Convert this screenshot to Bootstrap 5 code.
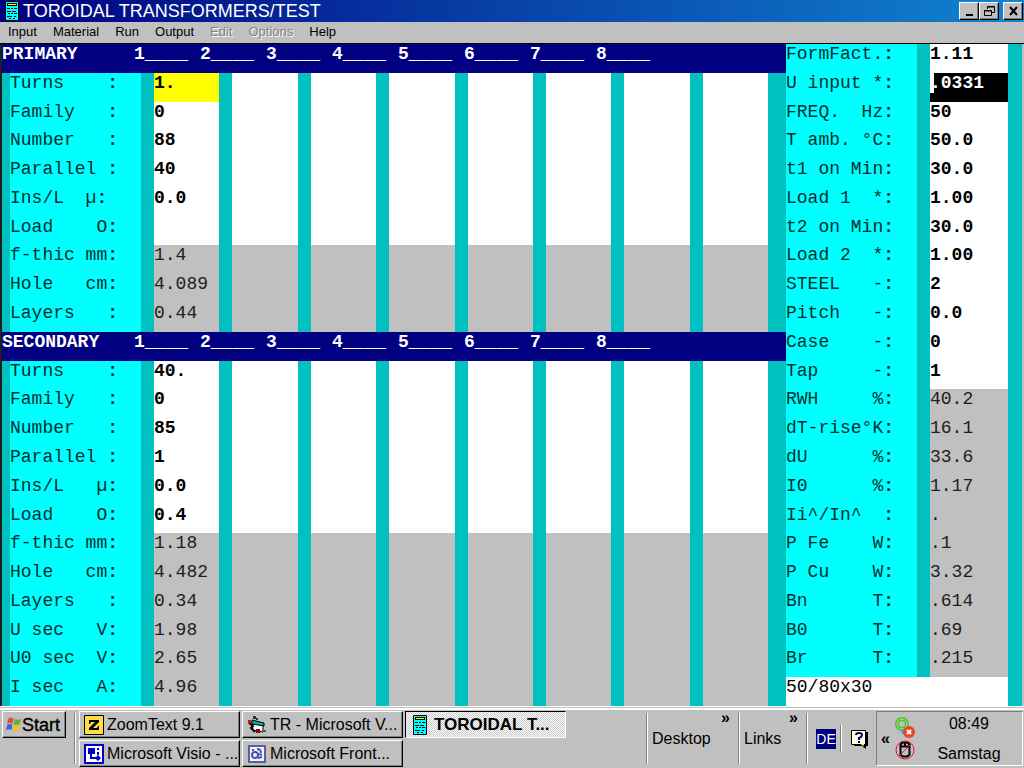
<!DOCTYPE html>
<html lang="en">
<head>
<meta charset="utf-8">
<meta name="viewport" content="width=device-width, initial-scale=1">
<title>TOROIDAL TRANSFORMERS/TEST</title>
<link href="https://cdn.jsdelivr.net/npm/bootstrap@5.3.0/dist/css/bootstrap.min.css" rel="stylesheet">
<style>
:root{--face:#c0c0c0;--teal:#00c0c0;--aqua:#00ffff;--navy:#000080}
body{font-family:"Liberation Sans",Arial,sans-serif;background:var(--face);color:#000;line-height:20px;min-height:100vh}
.titlebar{height:22px;background:linear-gradient(90deg,#000080,#1084d0);color:#fff;padding:0 1px 0 5px}
.titlebar h1{font-size:18px;line-height:22px;font-weight:400}
button{border-radius:0;font-family:inherit;color:#000}
.raised{background:var(--face);border:1px solid;border-color:#fff #000 #000 #fff;box-shadow:inset -1px -1px #808080}
.winbtn{width:20px;height:18px;padding:0}
.winbtn svg{display:block;margin:auto}
.menubar{height:22px;border-bottom:1px solid #000;font-size:13px;line-height:18px}
.menubar button{background:none;border:0;padding:0 8px 2px}
.menubar button:disabled{color:#808080;text-shadow:1px 1px #fff;opacity:1}
.work{border-left:2px solid #202020;border-right:2px solid var(--face);background:var(--teal);font-family:"Liberation Mono","Courier New",monospace;font-size:18px;line-height:20px}
.sheet{table-layout:fixed;border-collapse:separate;border-spacing:0;height:calc(100vh - 106px)}
.sheet td,.sheet th{padding:0;vertical-align:top;white-space:pre;font-weight:400;text-align:left;overflow:hidden}
.sheet tbody th{background:var(--aqua);color:#003030;border-right:13px solid var(--teal)}
.sheet .lead-in{border-left:8px solid var(--teal)}
.sheet td{background:var(--face);border-right:13px solid var(--teal);color:#202020}
.sheet td.entry{background:#fff;font-weight:700;color:#000}
.sheet td.picked{background:#ff0}
.sheet td.editing{background:#000;color:#fff;position:relative}
.caret{position:absolute;left:0;top:0;width:4px;height:20px;background:#fff}
.sheet .edge{border:0;background:var(--teal)}
.sheet tbody th.band{background:var(--navy);color:#fff;font-weight:700;border:0}
.band-name{width:132px}
.band-col{width:66px}
.results{width:236px;flex:none}
.results td{border-right-width:14px!important}
.sheet td.core{background:#fff;color:#000}
.taskbar{height:62px;border-top:1px solid #fff;background:var(--face)}
.taskbar-in{border-top:2px solid #fff;margin-top:1px;height:60px;padding:1px 0 2px 2px}
.task{height:27px;padding:0 4px;font-size:16px;line-height:24px;white-space:nowrap;overflow:hidden;text-align:left;gap:3px}
.task svg{flex:none}
.task.active{border:1px solid;border-color:#000 #fff #fff #000;background:repeating-conic-gradient(#fff 0 25%,#c8c8c8 0 50%) 0 0/2px 2px;font-size:17px;font-weight:700;padding-left:7px;gap:7px}
.start{height:27px;width:64px;padding:0 2px;font-size:18px;-webkit-text-stroke:.4px #000}
.tasks{display:grid;grid-template-columns:repeat(3,161px);gap:2px;align-content:start;padding-left:3px}
.grip{width:2px;border-left:1px solid #808080;border-right:1px solid #fff;margin:2px 0}
.quick{padding-left:4px}
.band-link{font-size:16px;color:#000;text-decoration:none}
.more{font-size:16px;line-height:14px;font-weight:700;background:none;border:0;padding:0 8px 0 0}
.lang{background:var(--navy);color:#fff;width:20px;height:20px;border:0;padding:0;font-size:14px;line-height:20px}
.tray{border:1px solid;border-color:#808080 #fff #fff #808080;width:147px;margin-right:1px}
.clock{font-size:16px;line-height:30px;width:90px;margin-right:8px}
</style>
</head>
<body class="d-flex flex-column">
<header class="titlebar d-flex align-items-center">
  <svg width="14" height="20" viewBox="0 0 14 20" aria-hidden="true"><use href="#calc"/></svg>
  <h1 class="m-0 ms-1 flex-grow-1">TOROIDAL TRANSFORMERS/TEST</h1>
  <button class="winbtn raised" aria-label="Minimize"><svg width="15" height="14"><path d="M4 11h7" stroke="#000" stroke-width="2"/></svg></button>
  <button class="winbtn raised" aria-label="Restore"><svg width="15" height="14" fill="none" stroke="#000"><path d="M5.500 5V2.500h7v6H10M5 3h8M2.500 6.500h7v5h-7zM2 7h8"/></svg></button>
  <button class="winbtn raised ms-1" aria-label="Close"><svg width="15" height="14"><path d="M4 3l7 8M11 3l-7 8" stroke="#000" stroke-width="2"/></svg></button>
</header>
<nav class="menubar d-flex" aria-label="Main menu">
  <button>Input</button><button>Material</button><button>Run</button><button>Output</button><button disabled>Edit</button><button disabled>Options</button><button>Help</button>
</nav>
<main class="work d-flex flex-grow-1">
  <table class="sheet w-100" id="windings">
    <colgroup><col style="width:152px"><col span="8"><col style="width:5px"></colgroup>
    <tbody></tbody>
  </table>
  <table class="sheet results" id="results">
    <colgroup><col style="width:144px"><col></colgroup>
    <tbody></tbody>
  </table>
</main>
<footer class="taskbar">
  <div class="taskbar-in d-flex">
    <button class="start raised d-flex align-items-center"><svg width="17" height="18" viewBox="0 0 16 16" aria-hidden="true"><path d="M3 2q3-2 5 0L7 7Q5 5 2 7z" fill="#e8502a"/><path d="M9 2q3 2 6 0l-1 5q-3 2-6 0z" fill="#62b03a"/><path d="M2 8q3-2 5 0l-1 5q-2-2-5 0z" fill="#3a68d8"/><path d="M8 8q3 2 6 0l-1 5q-3 2-6 0z" fill="#f4c020"/></svg><span>Start</span></button>
    <div class="grip ms-2"></div>
    <div class="tasks flex-grow-1">
      <button class="task raised d-flex align-items-center"><svg width="20" height="20" aria-hidden="true"><path d="M.5.5h19v19H.5z" fill="#fd4" stroke="#000"/><path d="M5 5h10v2l-6 6h4l1-2h1v4H5v-2l6-6H7L6 9H5z"/></svg>ZoomText 9.1</button>
      <button class="task raised d-flex align-items-center"><svg width="20" height="20" aria-hidden="true"><path d="M5 7l11 2v8L6 15z" fill="#fff" stroke="#000"/><path d="M5 5l12 3v3L5 9z" fill="#0aa" stroke="#000"/><path d="M2 8l4 3-2 2 4 4" stroke="#000" stroke-width="2" fill="none"/><path d="M6 1h3v3H6zM9 3h2v2H9z" fill="#143"/><path d="M9 14h4v4H9z" fill="#800"/><path d="M1 5h3v3H1z" fill="#a22"/><path d="M15 16h4" stroke="#555" stroke-width="2"/></svg>TR - Microsoft V...</button>
      <button class="task active d-flex align-items-center"><svg width="14" height="20" viewBox="0 0 14 20" aria-hidden="true"><g id="calc"><path d="M.5.5h13v19H.5z" fill="#0ff" stroke="#000"/><path d="M2 2h10v3H2z" fill="#000"/><path d="M3 3h8v1H3z" fill="#ff0"/><path d="M2 7.500h3M6 7.500h2M9 7.500h3M2 10.500h4M7 10.500h4M3 12.500h2M6 12.500h2M9 12.500h3M2 15.500h5M9 15.500h2M4 17.500h2M8 17.500h2" stroke="#000"/></g></svg>TOROIDAL T...</button>
      <button class="task raised d-flex align-items-center"><svg width="20" height="20" aria-hidden="true"><path d="M1 1h18v18H1z" fill="#fff" stroke="#00c" stroke-width="2"/><path d="M4 4h7v6H4zM11 14l3-3 3 3-3 3zM6 10h2v3h4v2H6zM13 4h2v2h-2zM13 8h2v3h-2z" fill="#00c"/></svg>Microsoft Visio - ...</button>
      <button class="task raised d-flex align-items-center"><svg width="20" height="20" aria-hidden="true"><path d="M2 2h16v16H2z" fill="#f4f4ff" stroke="#5560a8" stroke-width="2"/><g fill="none" stroke="#4a55a0" stroke-width="2"><circle cx="8" cy="11" r="3"/><path d="M5 6h2M10 5q4 0 4 4M11 14l4-1M12 10l3 1"/></g></svg>Microsoft Front...</button>
    </div>
    <div class="grip"></div>
    <div class="quick d-flex justify-content-between align-items-center" style="width:90px"><a class="band-link" href="#">Desktop</a><button class="more align-self-start">»</button></div>
    <div class="grip"></div>
    <div class="quick d-flex justify-content-between align-items-center" style="width:66px"><a class="band-link" href="#">Links</a><button class="more align-self-start">»</button></div>
    <div class="grip"></div>
    <div class="d-flex align-items-center ps-2 me-2"><button class="lang">DE</button><div class="grip h-50 mx-1"></div>
      <svg class="ms-1" width="18" height="20" role="img" aria-label="Help"><path d="M4 3h14v14h-2v3l-3-3H4z"/><path d="M1.500 1.500h14v14H14v3l-3-3H1.500z" fill="#ffd" stroke="#000"/><path d="M6 6q0-2 3-2t3 2q0 2-3 3v2M8 13h2" fill="none" stroke="#006" stroke-width="2"/></svg></div>
    <div class="tray d-flex align-items-center">
      <button class="more ms-1 pe-0">«</button>
      <div class="d-flex flex-column ms-1 flex-grow-1">
        <svg width="22" height="22" role="img" aria-label="Network"><circle cx="8" cy="7" r="5" fill="none" stroke="#5b3" stroke-width="4"/><circle cx="8" cy="7" r="5" fill="none" stroke="#ae7"/><path d="M6 13l5-2 2 7-5-1z" fill="#28b8e8"/><circle cx="15" cy="15" r="6" fill="#e8452a"/><path d="M13 13l4 4M17 13l-4 4" stroke="#fff" stroke-width="2"/></svg>
        <svg width="22" height="22" role="img" aria-label="Device disabled"><path d="M6.500 5.500l2-2h5l2 2v10l-2 2h-5l-2-2zM6 7.500h10M11 3v4" fill="none" stroke="#000" stroke-width="2"/><circle cx="11" cy="11" r="9" fill="none" stroke="#e01030"/><path d="M5 17L17 5" stroke="#e01030"/></svg>
      </div>
      <div class="clock text-center"><div>08:49</div><div>Samstag</div></div>
    </div>
  </div>
</footer>
<script>
// Each winding row: label, value, and whether the value can be edited.
const primary = [["Turns    ","1.",1],["Family   ","0",1],["Number   ","88",1],["Parallel ","40",1],["Ins/L  µ","0.0",1],["Load    O","",1],["f-thic mm","1.4"],["Hole   cm","4.089"],["Layers   ","0.44"]];
const secondary = [["Turns    ","40.",1],["Family   ","0",1],["Number   ","85",1],["Parallel ","1",1],["Ins/L   µ","0.0",1],["Load    O","0.4",1],["f-thic mm","1.18"],["Hole   cm","4.482"],["Layers   ","0.34"],["U sec   V","1.98"],["U0 sec  V","2.65"],["I sec   A","4.96"]];
const results = [["FormFact.","1.11",1],["U input *",".0331",1],["FREQ.  Hz","50",1],["T amb. °C","50.0",1],["t1 on Min","30.0",1],["Load 1  *","1.00",1],["t2 on Min","30.0",1],["Load 2  *","1.00",1],["STEEL   -","2",1],["Pitch   -","0.0",1],["Case    -","0",1],["Tap     -","1",1],["RWH     %","40.2"],["dT-rise°K","16.1"],["dU      %","33.6"],["I0      %","1.17"],["Ii^/In^  ","."],["P Fe    W",".1"],["P Cu    W","3.32"],["Bn      T",".614"],["B0      T",".69"],["Br      T",".215"]];
const band = name => `<tr><th class="band" colspan="10"><div class="d-flex"><span class="band-name">${name}</span>${[1,2,3,4,5,6,7,8].map(n => `<span class="band-col">${n}____</span>`).join("")}</div></th></tr>`;
const label = (t, c) => `<th scope="row" class="${c}">${t}<b>:</b></th>`;
const winding = rows => rows.map(([t, v, e], i) => `<tr>${label(t, "lead-in")}${Array.from({length: 8}, (_, n) => `<td class="${e ? "entry" : ""}${rows === primary && !i && !n ? " picked" : ""}">${n ? "" : v}</td>`).join("")}<td class="edge"></td></tr>`).join("");
document.querySelector("#windings tbody").innerHTML = band("PRIMARY") + winding(primary) + band("SECONDARY") + winding(secondary);
document.querySelector("#results tbody").innerHTML = results.map(([t, v, e], i) => `<tr>${label(t, "")}<td class="${e ? "entry" : ""}${i === 1 ? " editing" : ""}">${i === 1 ? '<span class="caret"></span>' : ""}${v}</td></tr>`).join("") + '<tr><td class="core" colspan="2">50/80x30</td></tr>';
</script>
<script src="https://cdn.jsdelivr.net/npm/bootstrap@5.3.0/dist/js/bootstrap.bundle.min.js"></script>
</body>
</html>
